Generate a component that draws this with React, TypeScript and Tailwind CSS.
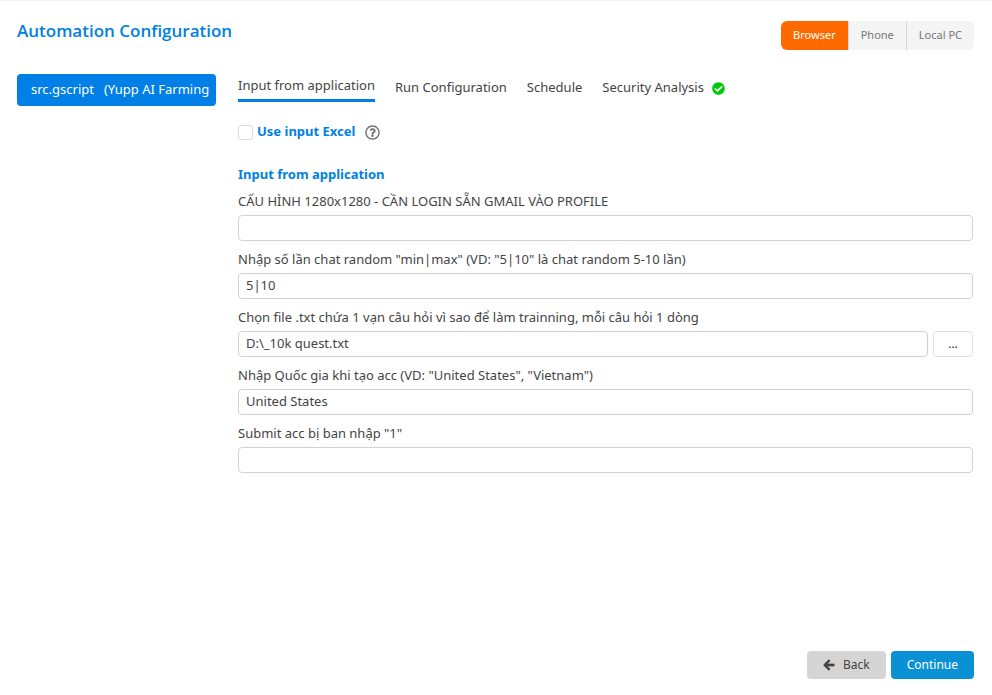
import React, { useState } from 'react';
import { FaArrowLeft, FaCheckCircle, FaRegQuestionCircle } from 'react-icons/fa';

interface Field {
  id: string;
  label: string;
  value: string;
  browse?: boolean;
}

const initialFields: Field[] = [
  { id: 'notice', label: 'CẤU HÌNH 1280x1280 - CẦN LOGIN SẴN GMAIL VÀO PROFILE', value: '' },
  { id: 'chatCount', label: 'Nhập số lần chat random "min|max" (VD: "5|10" là chat random 5-10 lần)', value: '5|10' },
  {
    id: 'questionFile',
    label: 'Chọn file .txt chứa 1 vạn câu hỏi vì sao để làm trainning, mỗi câu hỏi 1 dòng',
    value: 'D:\\_10k quest.txt',
    browse: true,
  },
  { id: 'country', label: 'Nhập Quốc gia khi tạo acc (VD: "United States", "Vietnam")', value: 'United States' },
  { id: 'submitBanned', label: 'Submit acc bị ban nhập "1"', value: '' },
];

const tabs = ['Input from application', 'Run Configuration', 'Schedule', 'Security Analysis'];
const targets = ['Browser', 'Phone', 'Local PC'];

interface FieldRowProps {
  field: Field;
  onChange: (id: string, value: string) => void;
}

const FieldRow: React.FC<FieldRowProps> = ({ field, onChange }) => (
  <div>
    <label htmlFor={field.id} className="block h-6 leading-5">
      {field.label}
    </label>
    <div className="flex gap-[5px]">
      <input
        id={field.id}
        type="text"
        value={field.value}
        onChange={(e) => onChange(field.id, e.target.value)}
        className="h-[26px] min-w-0 flex-1 rounded-[4px] border border-[#d2d2d2] bg-white px-[7px] pb-0.5 outline-none"
      />
      {field.browse && (
        <button type="button" className="h-[26px] w-10 rounded-[4px] border border-[#e2e2e2] bg-white text-xs text-[#333]">
          ...
        </button>
      )}
    </div>
  </div>
);

export default function App() {
  const [fields, setFields] = useState(initialFields);
  const [activeTab, setActiveTab] = useState(tabs[0]);
  const [target, setTarget] = useState(targets[0]);
  const [useExcel, setUseExcel] = useState(false);

  const updateField = (id: string, value: string) => {
    setFields((prev) => prev.map((f) => (f.id === id ? { ...f, value } : f)));
  };

  return (
    <div className="flex min-h-screen flex-col border-t border-[#f3f3f3] bg-white px-[17px] pb-4 font-['Noto_Sans',sans-serif] text-[13px] text-[#444]">
      <header className="flex items-start justify-between pt-5 pr-px">
        <h1 className="font-['Open_Sans',sans-serif] text-[17px] leading-5 font-semibold text-[#0080e6]">
          Automation Configuration
        </h1>
        <div className="flex h-[29px] divide-x divide-[#d3dbe0] overflow-hidden rounded-md bg-[#f4f4f4] text-[11px]">
          {targets.map((name) => (
            <button
              key={name}
              type="button"
              onClick={() => setTarget(name)}
              className={`px-3 ${target === name ? 'bg-[#ff6a00] text-white' : 'text-[#777]'}`}
            >
              {name}
            </button>
          ))}
        </div>
      </header>

      <div className="flex flex-1 items-start gap-[22px] pt-6 pr-0.5">
        <aside className="w-[199px] shrink-0">
          <button
            type="button"
            className="flex h-8 w-full items-center gap-2.5 overflow-hidden rounded-[4px] bg-[#0080e6] pl-3.5 whitespace-nowrap text-white"
          >
            <span>src.gscript</span>
            <span>(Yupp AI Farming</span>
          </button>
        </aside>

        <main className="min-w-0 flex-1">
          <nav className="flex h-7 items-center gap-5">
            {tabs.map((tab) => (
              <button
                key={tab}
                type="button"
                onClick={() => setActiveTab(tab)}
                className={`flex h-7 items-center gap-2 ${activeTab === tab ? 'border-b-3 border-[#0080e6] pb-0.5' : ''}`}
              >
                {tab}
                {tab === 'Security Analysis' && <FaCheckCircle className="size-[13px] text-[#00c90a]" />}
              </button>
            ))}
          </nav>

          <div className="mt-5 flex h-5 items-center">
            <label className="flex items-center gap-1 font-bold text-[#0080e6]">
              <input
                type="checkbox"
                checked={useExcel}
                onChange={(e) => setUseExcel(e.target.checked)}
                className="size-[15px] appearance-none rounded-[3px] border border-[#dcdcdc] bg-white checked:bg-[#0080e6]"
              />
              Use input Excel
            </label>
            <FaRegQuestionCircle className="ml-2.5 size-[15px] text-[#707070]" />
          </div>

          <h2 className="mt-[22px] leading-5 font-bold text-[#0080e6]">Input from application</h2>
          <form className="mt-[7px] flex flex-col gap-2">
            {fields.map((field) => (
              <FieldRow key={field.id} field={field} onChange={updateField} />
            ))}
          </form>
        </main>
      </div>

      <footer className="flex justify-end gap-[5px] pr-px text-xs">
        <button type="button" className="flex h-7 items-center gap-2 rounded-[4px] bg-[#d5d5d5] px-4">
          <FaArrowLeft className="size-3" stroke="currentColor" strokeWidth={36} />
          Back
        </button>
        <button type="button" className="h-7 rounded-[4px] bg-[#0a91d5] px-4 text-white">
          Continue
        </button>
      </footer>
    </div>
  );
}
